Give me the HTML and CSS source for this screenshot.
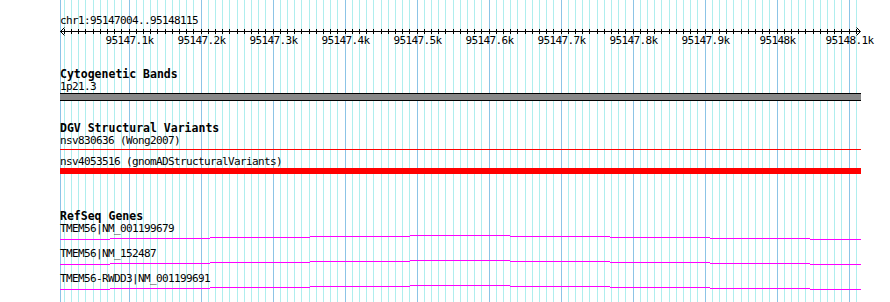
FILE: index.html
```html
<!DOCTYPE html>
<html lang="en">
<head>
  <meta charset="UTF-8"/>
  <title>Genome View</title>
  <link rel="stylesheet" href="styles.css">
</head>
<body>

<div class="browser">
  <svg class="grid" id="grid" width="890" height="302"></svg>

  <div class="tracks">
    <div class="ruler">
      <div class="locus">chr1:95147004..95148115</div>
      <svg class="axis" id="axis" width="801" height="20"></svg>
    </div>

    <div class="track cytobands">
      <div class="track-title">Cytogenetic Bands</div>
      <div class="feature-label">1p21.3</div>
      <div class="band"></div>
    </div>

    <div class="track variants">
      <div class="track-title">DGV Structural Variants</div>
      <div class="variant">
        <div class="feature-label">nsv830636 (Wong2007)</div>
        <div class="variant-box"><div class="variant-thin"></div></div>
      </div>
      <div class="variant">
        <div class="feature-label">nsv4053516 (gnomADStructuralVariants)</div>
        <div class="variant-box"><div class="variant-thick"></div></div>
      </div>
    </div>

    <div class="track genes">
      <div class="track-title">RefSeq Genes</div>
      <div class="gene-row">
        <div class="feature-label">TMEM56|NM_001199679</div>
        <svg class="gene" width="801" height="12"></svg>
      </div>
      <div class="gene-row">
        <div class="feature-label">TMEM56|NM_152487</div>
        <svg class="gene" width="801" height="12"></svg>
      </div>
      <div class="gene-row">
        <div class="feature-label">TMEM56-RWDD3|NM_001199691</div>
        <svg class="gene" width="801" height="12"></svg>
      </div>
    </div>
  </div>
</div>

<script>
  const NS = 'http://www.w3.org/2000/svg';
  const viewStart = 95147004;
  const viewEnd = 95148115;
  const viewLeft = 60;
  const bpScale = 0.72;

  function toX(pos) {
    return (pos - viewStart) * bpScale;
  }

  function make(tag, attrs) {
    const el = document.createElementNS(NS, tag);
    for (const key in attrs) el.setAttribute(key, attrs[key]);
    return el;
  }

  // vertical grid, one line per 10bp, darker every 100bp
  const grid = document.getElementById('grid');
  grid.appendChild(make('line', { x1: 60.5, x2: 60.5, y1: 0, y2: 302, class: 'major' }));
  for (let p = Math.ceil(viewStart / 10) * 10; p <= viewEnd; p += 10) {
    const x = Math.floor(viewLeft + toX(p)) + 0.5;
    grid.appendChild(make('line', { x1: x, x2: x, y1: 0, y2: 302, class: p % 100 === 0 ? 'major' : 'minor' }));
  }

  // ruler
  const axis = document.getElementById('axis');
  axis.appendChild(make('line', { x1: 0, x2: 800, y1: 4.5, y2: 4.5 }));
  axis.appendChild(make('path', { d: 'M4.5 0.5 L0.5 4.5 L4.5 8.5' }));
  axis.appendChild(make('path', { d: 'M796.5 0.5 L800.5 4.5 L796.5 8.5' }));
  for (let p = Math.ceil(viewStart / 10) * 10; p <= viewEnd; p += 10) {
    const x = Math.floor(toX(p)) + 0.5;
    axis.appendChild(make('line', { x1: x, x2: x, y1: 2, y2: 7 }));
    if (p % 100 === 0) {
      const label = make('text', { x: x, y: 16.5 });
      label.textContent = (p / 1000) + 'k';
      axis.appendChild(label);
    }
  }

  // gene models: flat line stepping up toward the middle
  const steps = [[0, 50, 4], [50, 150, 3], [150, 250, 2], [250, 350, 1], [350, 450, 0],
                 [450, 550, 1], [550, 650, 2], [650, 750, 3], [750, 801, 4]];
  document.querySelectorAll('.gene').forEach(svg => {
    steps.forEach(([from, to, off]) => {
      svg.appendChild(make('rect', { x: from, y: off, width: to - from, height: 1 }));
    });
  });
</script>

</body>
</html>
```

FILE: styles.css
```css
body {
  margin: 0;
  padding: 0;
  background-color: #ffffff;
  color: #000000;
  font-family: "DejaVu Sans Mono", monospace;
  font-size: 11px;
  letter-spacing: -0.62px;
  line-height: 12px;
}

.browser {
  position: relative;
  width: 890px;
  height: 302px;
  overflow: hidden;
}

.grid {
  position: absolute;
  top: 0;
  left: 0;
}

.grid line {
  stroke-width: 1;
}

.grid line.minor {
  stroke: #afeeee;
}

.grid line.major {
  stroke: #8cc4e6;
}

.tracks {
  position: relative;
  margin-left: 60px;
  width: 801px;
  padding-top: 15px;
}

.locus {
  height: 12px;
}

.axis {
  display: block;
  overflow: visible;
}

.axis line,
.axis path {
  stroke: #000000;
  stroke-width: 1;
  fill: none;
}

.axis text {
  font-family: "DejaVu Sans Mono", monospace;
  font-size: 11px;
  letter-spacing: -0.62px;
  text-anchor: middle;
  fill: #000000;
}

.track-title {
  font-weight: bold;
  font-size: 11.5px;
  letter-spacing: 0;
  height: 12px;
}

.feature-label {
  margin-top: 1px;
  height: 12px;
  white-space: nowrap;
}

.cytobands {
  margin-top: 21px;
}

.band {
  height: 6px;
  background-color: #888888;
  border-top: 1px solid #000000;
  border-bottom: 1px solid #000000;
}

.variants {
  margin-top: 21px;
}

.variant {
  margin-bottom: 1px;
}

.variant-box {
  height: 6px;
}

.variant-thin {
  margin-top: 2px;
  height: 1px;
  background-color: #ff0000;
}

.variant-thick {
  height: 6px;
  background-color: #ff0000;
}

.genes {
  margin-top: 36px;
}

.gene {
  display: block;
}

.gene rect {
  fill: #ff00ff;
}
```
